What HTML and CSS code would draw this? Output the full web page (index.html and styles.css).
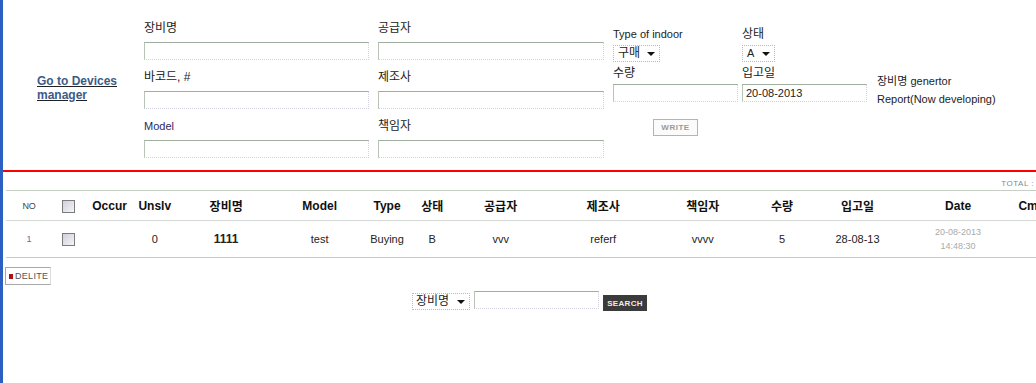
FILE: index.html
```html
<!DOCTYPE HTML>
<html>
<head>
<meta charset="utf-8">
<title>Devices</title>
<link rel="stylesheet" href="styles.css">
</head>
<body>
<div class="page">
  <div class="entry">
    <div class="nav"><a href="#" class="navLink">Go to Devices manager</a></div>
    <div class="col wide">
      <div class="field"><label class="ko">장비명</label><input type="text"></div>
      <div class="field"><label class="ko">바코드, #</label><input type="text"></div>
      <div class="field"><label class="blue">Model</label><input type="text"></div>
    </div>
    <div class="col wide">
      <div class="field"><label class="ko">공급자</label><input type="text"></div>
      <div class="field"><label class="ko">제조사</label><input type="text"></div>
      <div class="field"><label class="ko">책임자</label><input type="text"></div>
    </div>
    <div class="col small">
      <label>Type of indoor</label>
      <div class="sel sel1">구매<span class="arrow"></span></div>
      <label class="lbl2 ko">수량</label>
      <input type="text" class="inpShort">
      <div class="btnRow"><button class="btnWrite">WRITE</button></div>
    </div>
    <div class="col small">
      <label class="ko">상태</label>
      <div class="sel sel2">A<span class="arrow"></span></div>
      <label class="lbl2 ko">입고일</label>
      <input type="text" class="inpShort" value="20-08-2013">
    </div>
    <div class="col note">
      <div>장비명 genertor</div>
      <div>Report(Now developing)</div>
    </div>
  </div>

  <div class="list">
    <div class="total">TOTAL :</div>
    <table class="grid">
      <colgroup>
        <col style="width:46px"><col style="width:33px"><col style="width:48px"><col style="width:42px">
        <col style="width:100px"><col style="width:86px"><col style="width:48px"><col style="width:42px">
        <col style="width:94px"><col style="width:110px"><col style="width:88px"><col style="width:70px">
        <col style="width:80px"><col style="width:120px"><col style="width:30px"><col style="width:60px">
      </colgroup>
      <tr class="head">
        <td class="no">NO</td>
        <td><span class="chk"></span></td>
        <td>Occur</td>
        <td>Unslv</td>
        <td>장비명</td>
        <td>Model</td>
        <td>Type</td>
        <td>상태</td>
        <td>공급자</td>
        <td>제조사</td>
        <td>책임자</td>
        <td>수량</td>
        <td>입고일</td>
        <td>Date</td>
        <td class="left">Cmt</td>
        <td></td>
      </tr>
      <tr class="row">
        <td class="num">1</td>
        <td><span class="chk"></span></td>
        <td></td>
        <td>0</td>
        <td class="bold">1111</td>
        <td>test</td>
        <td>Buying</td>
        <td>B</td>
        <td>vvv</td>
        <td>referf</td>
        <td>vvvv</td>
        <td>5</td>
        <td>28-08-13</td>
        <td class="date">20-08-2013<br>14:48:30</td>
        <td></td>
        <td></td>
      </tr>
    </table>
    <div class="delRow"><button class="btnDel"><span class="sq"></span>DELITE</button></div>
    <div class="searchRow">
      <div class="sel sel3">장비명<span class="arrow"></span></div>
      <input type="text" class="inpSearch">
      <button class="btnSearch">SEARCH</button>
    </div>
  </div>
</div>
</body>
</html>
```
FILE: styles.css
```css
html, body { margin:0; padding:0; height:100%; background:#fff; overflow:hidden; }
body { border-left:3px solid #2b5fc2; font-family:"Liberation Sans", "Noto Sans CJK KR", sans-serif; font-size:11px; color:#222; }
.page { width:1033px; overflow:hidden; }

/* entry form */
.entry { display:flex; height:170px; border-bottom:2px solid #f00; }
.nav { width:141px; flex:none; box-sizing:border-box; padding-left:34px; padding-right:20px; align-self:center; margin-top:6px; }
.navLink { font-weight:bold; font-size:12px; line-height:14px; color:#3d5b86; text-decoration:underline; text-decoration-color:#222; }
.col { display:flex; flex-direction:column; flex:none; }
.col label { display:block; line-height:16px; height:16px; }
.col label.ko { font-size:12px; }
.wide { padding-top:20px; margin-right:9px; }
.wide:nth-child(2) { width:225px; }
.wide:nth-child(3) { width:226px; }
.field { margin-bottom:9px; }
.field label { margin-bottom:6px; }
.blue { color:#2a2a60; }
input { display:block; box-sizing:border-box; height:18px; width:100%; margin:0; padding:0 3px; font-family:inherit; font-size:11px; color:#222;
  border:1px dotted #d4d0e2; border-top:1px solid #9fae9f; border-left:1px solid #b8c4b8; background:#fff; outline:none; }
.small { width:125px; padding-top:26px; }
.small:nth-child(4) { margin-right:4px; }
.small:nth-child(5) { margin-right:10px; }
.sel { position:relative; box-sizing:border-box; height:17px; line-height:15px; margin-top:3px; padding-left:4px; border:1px dotted #b8b8c8; background:#fff; font-size:12px; }
.sel1 { width:47px; }
.sel2 { width:33px; font-size:11px; }
.arrow { position:absolute; right:4px; top:6px; border-left:4px solid transparent; border-right:4px solid transparent; border-top:4px solid #111; }
.lbl2 { margin-top:3px; }
.inpShort { margin-top:3px; }
.btnRow { margin-top:17px; text-align:center; }
.btnWrite { height:17px; width:45px; padding:0; border:1px solid #b4b4b4; background:#fbfbfb; color:#999; font-family:inherit; font-weight:bold; font-size:8px; letter-spacing:0.5px; }
.note { padding-top:72px; line-height:18px; font-size:11px; }

/* list */
.total { margin-top:6px; height:12px; line-height:12px; text-align:right; padding-right:2px; font-size:8px; color:#888; letter-spacing:0.5px; }
.grid { margin-left:3px; table-layout:fixed; width:1103px; border-collapse:collapse; }
.grid td { text-align:center; padding:0; white-space:nowrap; }
.head td { height:29px; font-weight:bold; font-size:12px; color:#111; border-top:1px solid #c6cec6; border-bottom:1px solid #d6dad6; }
.row td { height:36px; font-size:11px; color:#222; border-bottom:1px solid #c8ccc8; }
.head td.no { font-weight:normal; font-size:9px; color:#444; }
.head td.left { text-align:left; padding-left:0; }
.row td.num { font-size:9px; color:#6a6aa0; }
.row td.bold { font-weight:bold; font-size:12px; }
.row td.date { font-size:9px; line-height:14px; color:#aaa; }
.chk { display:inline-block; width:11px; height:11px; border:1px solid #7c7c7c; background:linear-gradient(135deg, #cfd0dc, #f4f4f8); vertical-align:middle; }

.delRow { margin-top:9px; margin-left:2px; }
.btnDel { display:flex; align-items:center; height:18px; width:46px; padding:0 0 0 3px; border:1px solid #a8a8a8; border-right-color:#ddd; background:#fff; color:#555; font-family:inherit; font-size:9px; letter-spacing:0.3px; }
.sq { display:inline-block; width:4px; height:5px; background:#a11; margin-right:2px; }
.searchRow { display:flex; justify-content:center; align-items:flex-start; margin-top:6px; padding-left:20px; gap:4px; }
.sel3 { width:58px; margin-top:2px; padding-left:3px; }
.inpSearch { width:125px; }
.btnSearch { height:16px; width:44px; margin-top:4px; padding:0; border:none; background:#3b3b3b; color:#eee; font-family:inherit; font-weight:bold; font-size:8px; letter-spacing:0.3px; }
```
